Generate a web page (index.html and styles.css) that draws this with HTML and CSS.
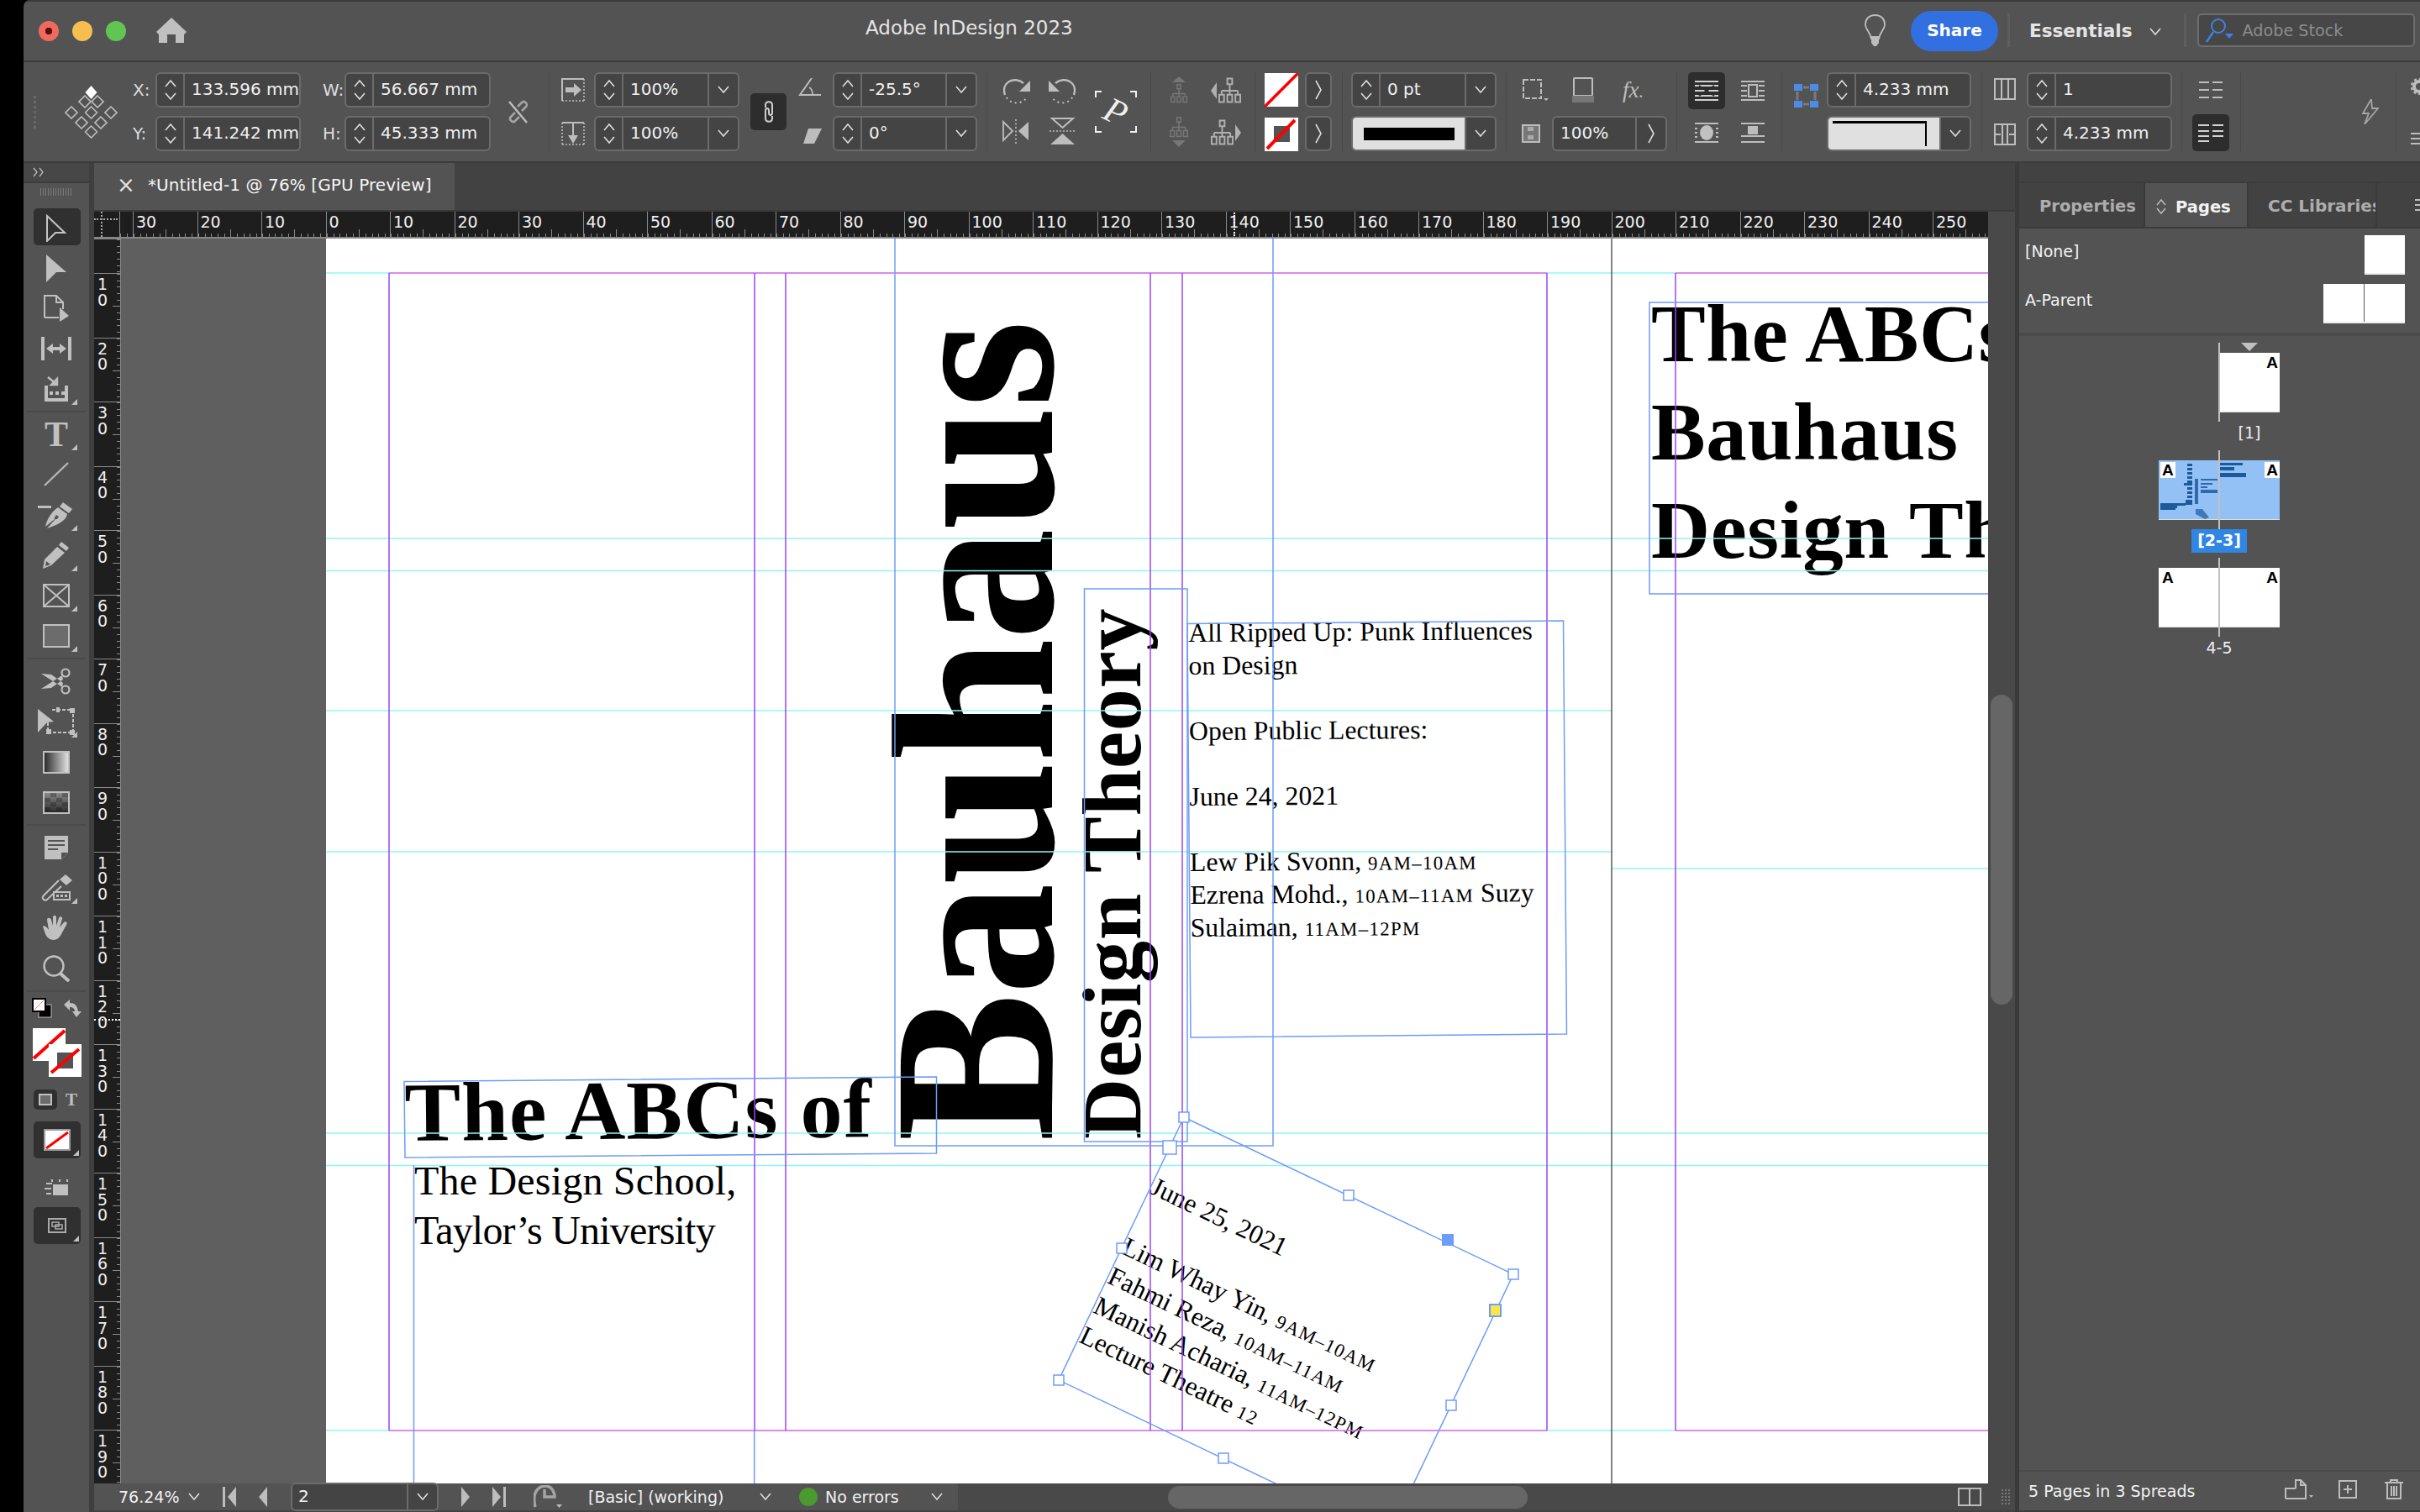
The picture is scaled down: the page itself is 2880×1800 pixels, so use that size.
FILE: index.html
```html
<!DOCTYPE html>
<html lang="en">
<head>
<meta charset="utf-8">
<title>Adobe InDesign 2023</title>
<link rel="stylesheet" href="styles.css">
</head>
<body>
<svg class="defs" aria-hidden="true">
  <symbol id="up" viewBox="0 0 14 10"><path d="M1 9L7 2l6 7" fill="none" stroke="#ddd" stroke-width="1.6"/></symbol>
  <symbol id="dn" viewBox="0 0 14 10"><path d="M1 1l6 7 6-7" fill="none" stroke="#ddd" stroke-width="1.6"/></symbol>
  <symbol id="rt" viewBox="0 0 10 24"><path d="M2 1l6 11-6 11" fill="none" stroke="#ddd" stroke-width="1.6"/></symbol>
  <symbol id="dia" viewBox="0 0 16 16"><path d="M8 1l7 7-7 7-7-7z" fill="none" stroke="#bdbdbd" stroke-width="1.6"/></symbol>
  <symbol id="tree" viewBox="0 0 28 32"><path d="M11 1h6v7h-6zM14 8v8M4 16h20M4 16v5M14 16v5M24 16v5M1 21h6v9H1zM11 21h6v9h-6zM21 21h6v9h-6z" fill="none" stroke="currentColor" stroke-width="2"/></symbol>
</svg>

<div class="app">
  <div class="strip"></div>
  <div class="win">

    <header class="title">
      <div class="lights"><i class="lt red"></i><i class="lt yel"></i><i class="lt grn"></i></div>
      <svg class="home" viewBox="0 0 36 30" width="36" height="30"><path d="M18 0L0 17l3 3v10h10V20h10v10h10V20l3-3z" fill="#c0c0c0"/></svg>
      <div class="appname">Adobe InDesign 2023</div>
      <svg class="bulb" viewBox="0 0 27 38" width="27" height="38"><path d="M13.500 1C6 1 2 6 2 12c0 6 6 10 7 17h9c1-7 7-11 7-17 0-6-4-11-11.500-11z" fill="none" stroke="#bdbdbd" stroke-width="1.800"/><path d="M9 26h9v8l-3 4h-3l-3-4z" fill="#bdbdbd"/></svg>
      <div class="share">Share</div>
      <i class="tsep"></i>
      <div class="ess">Essentials</div>
      <svg class="ess-chev" width="14" height="10"><use href="#dn"/></svg>
      <i class="tsep tsep2"></i>
      <div class="search">
        <svg viewBox="0 0 34 30" width="34" height="30"><circle cx="16" cy="10" r="8" fill="none" stroke="#3a83e6" stroke-width="2"/><path d="M10 17L2 29" stroke="#3a83e6" stroke-width="2.500"/><path d="M24 19h10l-5 6z" fill="#3a83e6"/></svg>
        <span>Adobe Stock</span>
      </div>
    </header>

    <section class="ctrl">
      <div class="c c-grip"></div>
      <div class="c c-proxy">
        <svg viewBox="0 0 63 63" width="63" height="63">
          <path d="M31.500 0l7 8-7 8-7-8z" fill="#fff"/>
          <use href="#dia" x="16" y="11" width="16" height="16"/><use href="#dia" x="31" y="11" width="16" height="16"/>
          <use href="#dia" x="0" y="24" width="16" height="16"/><use href="#dia" x="23.500" y="24" width="16" height="16"/><use href="#dia" x="47" y="24" width="16" height="16"/>
          <use href="#dia" x="12" y="36" width="16" height="16"/><use href="#dia" x="35" y="36" width="16" height="16"/>
          <use href="#dia" x="23.500" y="47" width="16" height="16"/>
        </svg>
      </div>
      <div class="c c-l1 col lab"><span>X:</span><span>Y:</span></div>
      <div class="c c-f1 col">
        <div class="f"><div class="st"><svg width="14" height="10"><use href="#up"/></svg><svg width="14" height="10"><use href="#dn"/></svg></div><div class="v">133.596 mm</div></div>
        <div class="f"><div class="st"><svg width="14" height="10"><use href="#up"/></svg><svg width="14" height="10"><use href="#dn"/></svg></div><div class="v">141.242 mm</div></div>
      </div>
      <div class="c c-l2 col lab"><span>W:</span><span>H:</span></div>
      <div class="c c-f2 col">
        <div class="f"><div class="st"><svg width="14" height="10"><use href="#up"/></svg><svg width="14" height="10"><use href="#dn"/></svg></div><div class="v">56.667 mm</div></div>
        <div class="f"><div class="st"><svg width="14" height="10"><use href="#up"/></svg><svg width="14" height="10"><use href="#dn"/></svg></div><div class="v">45.333 mm</div></div>
      </div>
      <div class="c c-chain">
        <svg viewBox="0 0 28 28" width="28" height="28"><g fill="none" stroke="#a5a5a5" stroke-width="2.500"><path d="M13 8l5-5c3-3 8 2 5 5l-5 5M15 20l-5 5c-3 3-8-2-5-5l5-5"/><path d="M3 2l21 25" stroke="#bdbdbd"/></g></svg>
      </div>
      <i class="c c-s1 vsep"></i>
      <div class="c c-sico col">
        <svg viewBox="0 0 28 28" width="28" height="28" class="ic"><path d="M27 27H1M27 27V1" fill="none" stroke="#bdbdbd" stroke-width="1.600" stroke-dasharray="2 2"/><path d="M1 27V1h26" fill="none" stroke="#bdbdbd" stroke-width="2"/><path d="M5 11h10V6l9 8-9 8v-5H5z" fill="#bdbdbd"/></svg>
        <svg viewBox="0 0 28 28" width="28" height="28" class="ic"><path d="M1 27V1M27 27V1M1 27h26" fill="none" stroke="#bdbdbd" stroke-width="1.600" stroke-dasharray="2 2"/><path d="M1 1h26M14 2v14" stroke="#bdbdbd" stroke-width="2"/><path d="M8 16h12l-6 10z" fill="#bdbdbd"/></svg>
      </div>
      <div class="c c-f3 col">
        <div class="f"><div class="st"><svg width="14" height="10"><use href="#up"/></svg><svg width="14" height="10"><use href="#dn"/></svg></div><div class="v">100%</div><div class="dd"><svg width="14" height="10"><use href="#dn"/></svg></div></div>
        <div class="f"><div class="st"><svg width="14" height="10"><use href="#up"/></svg><svg width="14" height="10"><use href="#dn"/></svg></div><div class="v">100%</div><div class="dd"><svg width="14" height="10"><use href="#dn"/></svg></div></div>
      </div>
      <div class="c c-link">
        <svg viewBox="0 0 16 28" width="16" height="28"><path d="M4 9V6c0-5 8-5 8 0v9c0 4-4 4-4 0v-3M12 19v3c0 5-8 5-8 0v-9c0-4 4-4 4 0v3" fill="none" stroke="#cfcfcf" stroke-width="2"/></svg>
      </div>
      <div class="c c-shear col">
        <svg viewBox="0 0 28 22" width="28" height="22" class="ic"><path d="M16 0L2 20h25" fill="none" stroke="#bdbdbd" stroke-width="2"/><path d="M13 11c4 2 4 6 4 9" fill="none" stroke="#bdbdbd" stroke-width="1.600"/></svg>
        <svg viewBox="0 0 28 22" width="28" height="22" class="ic"><path d="M12 2h16l-9 18H6z" fill="#bdbdbd"/></svg>
      </div>
      <div class="c c-f4 col">
        <div class="f"><div class="st"><svg width="14" height="10"><use href="#up"/></svg><svg width="14" height="10"><use href="#dn"/></svg></div><div class="v">-25.5°</div><div class="dd"><svg width="14" height="10"><use href="#dn"/></svg></div></div>
        <div class="f"><div class="st"><svg width="14" height="10"><use href="#up"/></svg><svg width="14" height="10"><use href="#dn"/></svg></div><div class="v">0°</div><div class="dd"><svg width="14" height="10"><use href="#dn"/></svg></div></div>
      </div>
      <i class="c c-s2 vsep"></i>
      <div class="c c-rot col">
        <svg viewBox="0 0 33 32" width="33" height="32" class="ic"><path d="M3 20C-2 5 14-3 25 6" fill="none" stroke="#bdbdbd" stroke-width="2.400"/><path d="M33 3v13H20z" fill="#bdbdbd"/><path d="M5 23c3 7 17 10 24 0" fill="none" stroke="#bdbdbd" stroke-width="2" stroke-dasharray="2 4"/></svg>
        <svg viewBox="0 0 33 32" width="33" height="32" class="ic"><path d="M16 1v30" stroke="#bdbdbd" stroke-width="1.600" stroke-dasharray="2 2.500"/><path d="M1 4v22l11-11z" fill="none" stroke="#bdbdbd" stroke-width="1.800"/><path d="M19 15L31 4v22z" fill="#bdbdbd"/></svg>
      </div>
      <div class="c c-rot2 col">
        <svg viewBox="0 0 33 32" width="33" height="32" class="ic"><path d="M30 20C35 5 19-3 8 6" fill="none" stroke="#bdbdbd" stroke-width="2.400"/><path d="M0 3v13h13z" fill="#bdbdbd"/><path d="M28 23c-3 7-17 10-24 0" fill="none" stroke="#bdbdbd" stroke-width="2" stroke-dasharray="2 4"/></svg>
        <svg viewBox="0 0 33 34" width="33" height="34" class="ic"><path d="M4 2h25L16.500 13z" fill="none" stroke="#bdbdbd" stroke-width="2"/><path d="M1 17h31" stroke="#bdbdbd" stroke-width="1.600" stroke-dasharray="2 2"/><path d="M16.500 20L31 33H2z" fill="#bdbdbd"/></svg>
      </div>
      <div class="c c-p">
        <svg viewBox="0 0 50 50" width="50" height="50"><path d="M1 8V1h7M42 1h7v7M1 42v7h7M49 42v7h-7" fill="none" stroke="#f0f0f0" stroke-width="2"/></svg>
        <span class="pglyph">P</span>
      </div>
      <i class="c c-s3 vsep"></i>
      <div class="c c-a1 col">
        <div class="dim"><svg viewBox="0 0 28 32" width="28" height="32"><path d="M14 0l8 7H6z" fill="currentColor"/><use href="#tree" y="9" height="23" width="28"/></svg></div>
        <div class="dim"><svg viewBox="0 0 28 36" width="28" height="36"><use href="#tree" height="25" width="28"/><path d="M14 36l8-8H6z" fill="currentColor"/></svg></div>
      </div>
      <div class="c c-a2 col">
        <div class="dim lite"><svg viewBox="0 0 36 34" width="36" height="34"><path d="M0 17l7-10v20z" fill="currentColor"/><use href="#tree" x="9" width="27" height="34"/></svg></div>
        <div class="dim lite"><svg viewBox="0 0 36 34" width="36" height="34"><use href="#tree" width="27" height="34"/><path d="M36 17l-7-10v20z" fill="currentColor"/></svg></div>
      </div>
      <i class="c c-s4 vsep"></i>
      <div class="c c-sw col">
        <svg viewBox="0 0 40 40" width="40" height="40" class="ic"><rect width="40" height="40" fill="#fff"/><path d="M0 40L40 0" stroke="#f00" stroke-width="3.500"/></svg>
        <svg viewBox="0 0 40 40" width="40" height="40" class="ic"><rect width="40" height="40" fill="#fff"/><rect x="11" y="10" width="19" height="19" fill="#535353"/><path d="M3 37L36 3" stroke="#f00" stroke-width="4"/></svg>
      </div>
      <div class="c c-swb col">
        <div class="chev"><svg width="10" height="24"><use href="#rt"/></svg></div>
        <div class="chev"><svg width="10" height="24"><use href="#rt"/></svg></div>
      </div>
      <i class="c c-s5 vsep"></i>
      <div class="c c-f5 col">
        <div class="f"><div class="st"><svg width="14" height="10"><use href="#up"/></svg><svg width="14" height="10"><use href="#dn"/></svg></div><div class="v">0 pt</div><div class="dd"><svg width="14" height="10"><use href="#dn"/></svg></div></div>
        <div class="f"><div class="v pre"><i class="strokebar"></i></div><div class="dd"><svg width="14" height="10"><use href="#dn"/></svg></div></div>
      </div>
      <i class="c c-s6 vsep"></i>
      <div class="c c-mix col">
        <div class="mixrow">
          <svg viewBox="0 0 32 28" width="32" height="28"><path d="M2 2h21v22H2z" fill="none" stroke="#bdbdbd" stroke-width="2" stroke-dasharray="6 2"/><path d="M26 24h6l-3 3z" fill="#bdbdbd"/></svg>
          <svg viewBox="0 0 26 30" width="26" height="30"><rect x="2" y="1" width="22" height="21" rx="1" fill="none" stroke="#bdbdbd" stroke-width="2"/><rect y="22" width="26" height="8" fill="#777"/></svg>
          <span class="fx">fx<small>.</small></span>
        </div>
        <div class="mixrow">
          <svg viewBox="0 0 22 22" width="22" height="22"><rect x="1" y="1" width="20" height="20" fill="#777" stroke="#bdbdbd" stroke-width="2"/><path d="M7 3h7v5H7zM7 13h7v5H7z" fill="#aaa"/></svg>
          <div class="f f-op"><div class="v">100%</div><div class="dd small"><svg width="10" height="24"><use href="#rt"/></svg></div></div>
        </div>
      </div>
      <i class="c c-s7 vsep"></i>
      <div class="c c-wrap col">
        <div class="mixrow tight">
          <div class="dkbtn"><svg viewBox="0 0 30 26" width="30" height="26"><path d="M1 2h28M1 24h28M1 7h28M1 19h28M1 13h28" stroke="#d0d0d0" stroke-width="2" fill="none"/><path d="M6 7l18 12M24 7L6 19" stroke="#2d2d2d" stroke-width="2" fill="none"/></svg></div>
          <svg class="wr" viewBox="0 0 30 26" width="30" height="26"><path d="M1 2h28M1 24h28M1 7h7M22 7h7M1 13h7M22 13h7M1 19h7M22 19h7" stroke="#bdbdbd" stroke-width="2"/><rect x="10" y="6" width="10" height="14" fill="none" stroke="#bdbdbd" stroke-width="2"/></svg>
        </div>
        <div class="mixrow tight">
          <div class="noborder"><svg viewBox="0 0 30 26" width="30" height="26"><path d="M1 2h28M1 24h28M1 8h3M26 8h3M1 13h3M26 13h3M1 18h3M26 18h3" stroke="#bdbdbd" stroke-width="2"/><ellipse cx="15" cy="13" rx="8" ry="9" fill="#c0c0c0"/></svg></div>
          <svg class="wr" viewBox="0 0 30 26" width="30" height="26"><path d="M1 2h28M1 17h28M1 24h28" stroke="#bdbdbd" stroke-width="2"/><rect x="9" y="5" width="12" height="10" fill="#bdbdbd"/></svg>
        </div>
      </div>
      <i class="c c-s8 vsep"></i>
      <div class="c c-grid">
        <svg viewBox="0 0 29 28" width="29" height="28"><path d="M0 0h10v8H0zM19 0h10v8H19zM0 20h10v8H0zM19 20h10v8H19z" fill="#4c8be8"/><path d="M11 4h7M4 9v10M25 9v10M11 24h7" stroke="#7a7a7a" stroke-width="3"/></svg>
      </div>
      <div class="c c-f6 col">
        <div class="f"><div class="st"><svg width="14" height="10"><use href="#up"/></svg><svg width="14" height="10"><use href="#dn"/></svg></div><div class="v">4.233 mm</div></div>
        <div class="f"><div class="v pre strokestyle"><i></i></div><div class="dd"><svg width="14" height="10"><use href="#dn"/></svg></div></div>
      </div>
      <i class="c c-s9 vsep"></i>
      <div class="c c-colic col">
        <svg viewBox="0 0 26 26" width="26" height="26" class="ic"><path d="M1 1h24v24H1zM9 1v24M17 1v24" fill="none" stroke="#bdbdbd" stroke-width="2"/></svg>
        <svg viewBox="0 0 26 26" width="26" height="26" class="ic"><path d="M1 1h24v24H1zM10 1v24M16 1v24M2 13h6M24 13h-6" fill="none" stroke="#bdbdbd" stroke-width="2"/></svg>
      </div>
      <div class="c c-f7 col">
        <div class="f"><div class="st"><svg width="14" height="10"><use href="#up"/></svg><svg width="14" height="10"><use href="#dn"/></svg></div><div class="v">1</div></div>
        <div class="f"><div class="st"><svg width="14" height="10"><use href="#up"/></svg><svg width="14" height="10"><use href="#dn"/></svg></div><div class="v">4.233 mm</div></div>
      </div>
      <i class="c c-s10 vsep"></i>
      <div class="c c-col2 col">
        <div class="colrow"><svg viewBox="0 0 30 22" width="30" height="22"><path d="M1 2h12M17 2h12M1 11h12M17 11h12M1 20h12M17 20h12" stroke="#bdbdbd" stroke-width="2"/></svg></div>
        <div class="dkbtn"><svg viewBox="0 0 32 22" width="32" height="22"><path d="M1 2h13M18 2h13M1 9h13M18 9h13M1 15h13M18 15h13M1 21h13" stroke="#d0d0d0" stroke-width="2"/></svg></div>
      </div>
      <i class="c c-s11 vsep"></i>
      <div class="c c-bolt"><svg viewBox="0 0 20 30" width="20" height="30"><path d="M11 0L1 17h7L3 30 19 11h-7z" fill="none" stroke="#a5a5a5" stroke-width="1.800"/></svg></div>
      <i class="c c-s12 vsep"></i>
      <div class="c c-gear col">
        <svg viewBox="0 0 20 20" width="20" height="20" class="ic"><circle cx="10" cy="10" r="6" fill="none" stroke="#bdbdbd" stroke-width="4"/><circle cx="10" cy="10" r="9" fill="none" stroke="#bdbdbd" stroke-width="2.500" stroke-dasharray="3 3"/></svg>
        <svg viewBox="0 0 20 16" width="20" height="16" class="ic"><path d="M0 2h20M0 8h20M0 14h20" stroke="#bdbdbd" stroke-width="2"/></svg>
      </div>
    </section>

    <div class="main">
      <aside class="side">
        <div class="collapse"><svg viewBox="0 0 14 14" width="14" height="14"><path d="M1 2l4 5-4 5M8 2l4 5-4 5" fill="none" stroke="#bbb" stroke-width="1.300"/></svg></div>
        <div class="grip"></div>
        <div class="tool on"><svg viewBox="0 0 24 33" width="24" height="33"><path d="M1 2l21 20H11L1 32z" fill="none" stroke="#c4c4c4" stroke-width="2"/></svg></div>
        <div class="tool"><svg viewBox="0 0 24 33" width="24" height="33"><path d="M0 0l24 21H12L0 33z" fill="#c0c0c0"/></svg></div>
        <div class="tool"><svg viewBox="0 0 30 32" width="30" height="32"><path d="M1 27V1h14l8 8v8M1 27h17M15 1v8h8" fill="none" stroke="#c0c0c0" stroke-width="2"/><path d="M19 15l11 10-11 7z" fill="#c0c0c0"/></svg></div>
        <div class="tool"><svg viewBox="0 0 36 28" width="36" height="28"><path d="M0 0h4v28H0zM32 0h4v28h-4zM6 14l8-6v4h8V8l8 6-8 6v-4h-8v4z" fill="#c0c0c0"/></svg></div>
        <div class="tool fly"><svg viewBox="0 0 30 32" width="30" height="32"><path d="M1 12v19h28V12h-4v15H5V12z" fill="#c0c0c0"/><path d="M5 2l10 8M9 11h7V4z" stroke="#c0c0c0" stroke-width="2.400" fill="none"/><path d="M7 19h4v4H7zM14 19h4v4h-4zM21 19h4v4h-4z" fill="#c0c0c0"/></svg></div>
        <i class="tsepx"></i>
        <div class="tool fly"><span class="t-glyph">T</span></div>
        <div class="tool"><svg viewBox="0 0 30 30" width="30" height="30"><path d="M1 28L29 1" stroke="#b5b5b5" stroke-width="2.400"/></svg></div>
        <div class="tool fly"><svg viewBox="0 0 44 34" width="44" height="34"><path d="M0 6h16v3H0zM30 2l11 8-4 5-11-8z" fill="#c0c0c0"/><path d="M24 8l11 8c-1 8-12 13-24 17l10-11 2 0 2-3-3-2-2 3 0 2-11 9c2-10 8-18 15-23z" fill="#c0c0c0"/></svg></div>
        <div class="tool fly"><svg viewBox="0 0 34 34" width="34" height="34"><path d="M23 1l9 7-3 4-9-7zM18 7l9 7-16 15-10 4 2-11z" fill="#c0c0c0"/><path d="M5 24l5 4-6 2z" fill="#535353"/></svg></div>
        <div class="tool fly"><svg viewBox="0 0 32 28" width="32" height="28"><path d="M1 1h30v26H1zM1 1l30 26M31 1L1 27" fill="none" stroke="#c0c0c0" stroke-width="2"/></svg></div>
        <div class="tool fly"><svg viewBox="0 0 32 28" width="32" height="28"><rect x="1" y="1" width="30" height="26" fill="#6c6c6c" stroke="#c0c0c0" stroke-width="2"/></svg></div>
        <i class="tsepx"></i>
        <div class="tool"><svg viewBox="0 0 36 32" width="36" height="32"><circle cx="29" cy="6" r="4.500" fill="none" stroke="#c0c0c0" stroke-width="2.200"/><circle cx="29" cy="26" r="4.500" fill="none" stroke="#c0c0c0" stroke-width="2.200"/><path d="M25 9L0 25l12-1 14-10zM25 23L0 7l12 1 14 10z" fill="#c0c0c0"/></svg></div>
        <div class="tool fly"><svg viewBox="0 0 44 34" width="44" height="34"><path d="M0 0l19 15-8 1-11 12z" fill="#c0c0c0" transform="translate(0 2)"/><path d="M12 12v18h30V3H16" fill="none" stroke="#c0c0c0" stroke-width="2" stroke-dasharray="4 2"/><path d="M10 26h6v6h-6zM38 1h6v6h-6zM38 27h6v6h-6zM22 0h4v6h-4z" fill="#c0c0c0"/></svg></div>
        <div class="tool"><i class="swatch-tool grad"></i></div>
        <div class="tool"><i class="swatch-tool feather"></i></div>
        <i class="tsepx"></i>
        <div class="tool"><svg viewBox="0 0 28 28" width="28" height="28"><path d="M0 0h28v20l-8 8H0zM4 5h20v2H4zM4 10h20v2H4zM4 15h12v2H4z" fill="#c0c0c0" fill-rule="evenodd"/><path d="M20 20h8l-8 8z" fill="#535353"/></svg></div>
        <div class="tool fly"><svg viewBox="0 0 42 32" width="42" height="32"><path d="M32 0l8 7-7 6-8-7z" fill="#c0c0c0"/><path d="M24 7l-18 18c-3 3 0 7 4 5l17-16" fill="none" stroke="#c0c0c0" stroke-width="2"/><rect x="18" y="21" width="19" height="9" fill="#535353" stroke="#c0c0c0" stroke-width="2"/><path d="M21 24h3v3h-3zM26 24h3v3h-3zM31 24h3v3h-3z" fill="#c0c0c0"/></svg></div>
        <div class="tool"><svg viewBox="0 0 32 32" width="32" height="32"><path d="M0 14c2-2 5 1 7 4L5 6c0-3 4-3 5 0l2 7V3c0-3 4-3 4 0v10l3-9c1-3 5-2 4 1l-3 10 5-6c2-2 5 0 3 3l-6 11c-2 4-5 7-9 7-5 0-8-3-10-7z" fill="#c0c0c0"/></svg></div>
        <div class="tool"><svg viewBox="0 0 32 32" width="32" height="32"><circle cx="13" cy="13" r="11.500" fill="none" stroke="#c0c0c0" stroke-width="2.400"/><path d="M21 22l10 9" stroke="#c0c0c0" stroke-width="4"/></svg></div>
        <i class="tsepx"></i>
        <div class="swaprow">
          <svg viewBox="0 0 24 24" width="24" height="24"><rect x="8" y="8" width="15" height="15" fill="#000" stroke="#c0c0c0"/><rect x="1" y="1" width="15" height="15" fill="#fff" stroke="#000" stroke-width="2"/><path d="M3 14L14 3" stroke="#e77" stroke-width="1"/></svg>
          <svg viewBox="0 0 22 22" width="22" height="22"><path d="M0 6l7-6v4c6 0 9 3 10 10h4l-6 7-5-7h3c0-3-2-5-6-5v4z" fill="#c0c0c0"/></svg>
        </div>
        <div class="fillstroke">
          <svg class="fill-sw" viewBox="0 0 39 39" width="39" height="39"><rect width="39" height="39" fill="#fff"/><path d="M1 36L38 3" stroke="#f00" stroke-width="4"/></svg>
          <svg class="stroke-sw" viewBox="0 0 39 39" width="39" height="39"><rect width="39" height="39" fill="#fff"/><rect x="10" y="10" width="19" height="19" fill="#535353"/><path d="M3 34L36 6" stroke="#f00" stroke-width="4"/></svg>
        </div>
        <div class="cont">
          <div class="cont-on"><i></i></div>
          <span class="cont-t">T</span>
        </div>
        <div class="bigbtn fly"><svg viewBox="0 0 32 26" width="32" height="26"><rect width="32" height="26" fill="#fff" stroke="#9c9c9c" stroke-width="4"/><path d="M3 23L29 4" stroke="#f00" stroke-width="3"/></svg></div>
        <div class="preview"><svg viewBox="0 0 28 20" width="28" height="20"><path d="M2 6h7M0 12h8M2 18h6M9 1v3M18 1v3M27 1v3" stroke="#c0c0c0" stroke-width="2"/><rect x="10" y="7" width="18" height="13" fill="#c0c0c0"/></svg></div>
        <div class="bigbtn lower fly"><svg viewBox="0 0 22 18" width="22" height="18"><rect x="1" y="1" width="20" height="16" fill="none" stroke="#aaa" stroke-width="2"/><rect x="5" y="5" width="8" height="5" fill="none" stroke="#aaa" stroke-width="1.500"/><rect x="9" y="8" width="8" height="5" fill="none" stroke="#aaa" stroke-width="1.500"/></svg></div>
      </aside>

      <div class="work">
        <div class="tabs">
          <div class="doctab"><span class="x">×</span><span>*Untitled-1 @ 76% [GPU Preview]</span></div>
        </div>
        <div class="ed">
          <div class="hr">
            <div class="corner"></div>
            <div class="hc lead"></div>
            <div class="hc">30</div><div class="hc">20</div><div class="hc">10</div><div class="hc">0</div><div class="hc">10</div><div class="hc">20</div><div class="hc">30</div><div class="hc">40</div><div class="hc">50</div><div class="hc">60</div><div class="hc">70</div><div class="hc">80</div><div class="hc">90</div><div class="hc">100</div><div class="hc">110</div><div class="hc">120</div><div class="hc">130</div><div class="hc">140</div><div class="hc">150</div><div class="hc">160</div><div class="hc">170</div><div class="hc">180</div><div class="hc">190</div><div class="hc">200</div><div class="hc">210</div><div class="hc">220</div><div class="hc">230</div><div class="hc">240</div><div class="hc">250</div>
            <i class="hmark"></i>
          </div>
          <div class="vs"><div class="vpill"></div></div>
          <div class="vr">
            <div class="vc lead"></div>
            <div class="vc">10</div><div class="vc">20</div><div class="vc">30</div><div class="vc">40</div><div class="vc">50</div><div class="vc">60</div><div class="vc">70</div><div class="vc">80</div><div class="vc">90</div><div class="vc">100</div><div class="vc">110</div><div class="vc">120</div><div class="vc">130</div><div class="vc">140</div><div class="vc">150</div><div class="vc">160</div><div class="vc">170</div><div class="vc">180</div><div class="vc">190</div>
            <i class="vmark"></i>
          </div>
          <div class="canvas">
            <div class="art">
              <div class="page"></div>
              <div class="txt bau">Bauhaus</div>
              <div class="txt dth">Design Theory</div>
              <div class="txt abc">The ABCs of</div>
              <div class="txt sub">The Design School,<br><span class="sub2">Taylor’s University</span></div>
              <div class="txt lec">All Ripped Up: Punk Influences<br>on Design<br><br>Open Public Lectures:<br><br>June 24, 2021<br><br>Lew Pik Svonn, <span class="sc">9AM–10AM</span><br>Ezrena Mohd., <span class="sc">10AM–11AM</span> Suzy<br>Sulaiman, <span class="sc">11AM–12PM</span></div>
              <div class="txt lec2">June 25, 2021<br><br>Lim Whay Yin, <span class="sc">9AM–10AM</span><br>Fahmi Reza, <span class="sc">10AM–11AM</span><br>Manish Acharia, <span class="sc">11AM–12PM</span><br>Lecture Theatre <span class="sc">12</span></div>
              <div class="txt rt">The ABCs of<br>Bauhaus<br>Design Theory</div>
              <svg class="lines" width="2880" height="1800" viewBox="0 0 2880 1800">
                <g stroke="#8ff6f6" stroke-width="1.500">
                  <path d="M388 325H463M1841 325H1994M388 1703H463M1841 1703H1994"/>
                  <path d="M388 641H2366M388 679.500H2366M388 1349H2366M388 1387.500H2366"/>
                  <path d="M388 846H1918M388 1014H1918M1918 1034H2366"/>
                </g>
                <path d="M1918 284V1766" stroke="#5a5a5a" stroke-width="1.500"/>
                <g stroke="#d163ef" stroke-width="1.500"><path d="M463 325H1841M1994 325H2366M463 1703H1841M1994 1703H2366"/></g>
                <g stroke="#9a45f5" stroke-width="1.500"><path d="M463 325V1703M898 325V1703M935 325V1703M1369 325V1703M1407 325V1703M1841 325V1703M1994 325V1703"/></g>
                <g fill="none" stroke="#6c9df7" stroke-width="1.500">
                  <path d="M1065 284V1364H1515V284"/>
                  <path d="M1290.500 701H1413V1359H1290.500Z"/>
                  <path d="M1413 742.500L1860.500 739L1864.500 1231L1417 1235Z"/>
                  <path d="M481 1287.500L1114.500 1282V1373L482 1378Z"/>
                  <path d="M492.500 1387V1766M897.700 1703V1766"/>
                  <path d="M2366 360H1963V707H2366"/>
                  <path d="M1409 1330L1801 1517L1652 1830L1260 1643Z"/>
                </g>
                <g fill="#fff" stroke="#6c9df7" stroke-width="1.500">
                  <rect x="1403" y="1324" width="12" height="12"/>
                  <rect x="1384" y="1358" width="16" height="16"/>
                  <rect x="1599" y="1417" width="12" height="12"/>
                  <rect x="1795" y="1511" width="12" height="12"/>
                  <rect x="1329" y="1480" width="12" height="12"/>
                  <rect x="1254" y="1637" width="12" height="12"/>
                  <rect x="1450" y="1730" width="12" height="12"/>
                  <rect x="1721" y="1667" width="12" height="12"/>
                </g>
                <rect x="1716" y="1469" width="14" height="14" fill="#6c9df7"/>
                <rect x="1773" y="1553" width="13" height="14" fill="#fbe64a" stroke="#6c9df7" stroke-width="2"/>
              </svg>
            </div>
          </div>
          <div class="status">
            <div class="stat-l">
              <span class="zoomv">76.24%</span>
              <svg width="14" height="10"><use href="#dn"/></svg>
              <svg class="nav n1" viewBox="0 0 16 26" width="16" height="26"><path d="M0 1h3v24H0zM16 1v24L6 13z" fill="#bdbdbd"/></svg>
              <svg class="nav n2" viewBox="0 0 10 26" width="10" height="26"><path d="M10 1v24L0 13z" fill="#bdbdbd"/></svg>
              <div class="f pgf"><div class="v">2</div><div class="dd"><svg width="14" height="10"><use href="#dn"/></svg></div></div>
              <svg class="nav n3" viewBox="0 0 10 26" width="10" height="26"><path d="M0 1v24L10 13z" fill="#bdbdbd"/></svg>
              <svg class="nav n4" viewBox="0 0 16 26" width="16" height="26"><path d="M16 1h-3v24h3zM0 1v24L10 13z" fill="#bdbdbd"/></svg>
              <svg class="nav n5" viewBox="0 0 34 28" width="34" height="28"><path d="M2 26C-3 6 8 1 14 1c8 0 11 8 11 13H13V5" fill="none" stroke="#a5a5a5" stroke-width="3.500"/><path d="M27 23h7l-3.500 4z" fill="#bdbdbd"/></svg>
              <span class="basic">[Basic] (working)</span>
              <svg class="nav n6" width="14" height="10"><use href="#dn"/></svg>
              <i class="dot"></i>
              <span class="noerr">No errors</span>
              <svg class="nav n7" width="14" height="10"><use href="#dn"/></svg>
            </div>
            <div class="stat-r">
              <div class="hpill"></div>
              <svg class="spreadic" viewBox="0 0 28 22" width="28" height="22"><path d="M1 1h26v20H1zM14 1v20" fill="none" stroke="#bdbdbd" stroke-width="2"/></svg>
              <i class="rgrip"></i>
            </div>
          </div>
        </div>
      </div>

      <aside class="panel">
        <div class="pstrip"></div>
        <div class="ptabs">
          <div class="ptab first">Properties</div>
          <div class="ptab act"><svg viewBox="0 0 12 20" width="12" height="20"><path d="M1 8l5-6 5 6M1 12l5 6 5-6" fill="none" stroke="#bbb" stroke-width="1.500"/></svg><span>Pages</span></div>
          <div class="ptab third">CC Libraries</div>
          <div class="pmenu"><svg viewBox="0 0 18 16" width="18" height="16"><path d="M0 2h18M0 8h18M0 14h18" stroke="#bdbdbd" stroke-width="2"/></svg></div>
        </div>
        <div class="masters">
          <div class="mrow"><span>[None]</span><div class="mth"><i></i></div></div>
          <div class="mrow"><span>A-Parent</span><div class="mth"><i></i><i></i></div></div>
        </div>
        <div class="spreads">
          <div class="spread">
            <div class="pg empty"></div>
            <div class="pg"><b class="a ar">A</b></div>
            <i class="spine"></i><i class="marker"></i>
          </div>
          <div class="plabel right"><span>[1]</span></div>
          <div class="spread sel">
            <div class="pg"><b class="a">A</b></div>
            <div class="pg"><b class="a ar">A</b></div>
            <svg class="mini" viewBox="2568 548 144 71" width="144" height="71">
              <g fill="#1d5a9c">
                <path d="M2641 551h27v3h-27zM2641 556h17v4h-17zM2641 563h31v5h-31z"/>
                <path d="M2602 552h6v3h-6zM2602 557h6v3h-6zM2602 562h6v3h-6zM2602 567h6v3h-6zM2602 572h6v3h-6zM2598 575h10v3h-10zM2602 580h6v3h-6zM2602 585h6v3h-6zM2602 590h6v3h-6zM2600 595h8v3h-8z"/>
                <path d="M2611 570h4v30h-4zM2618 570h20v2h-20zM2618 575h14v2h-14zM2618 579h8v2h-8zM2618 583h20v4h-20z" opacity=".85"/>
                <path d="M2570 599h30v3h-30zM2570 602h20v3h-20zM2570 605h18v2h-18zM2600 598h8v3h-8z"/>
                <path d="M2612 606l8 0 8 10-5 2-11-6z" opacity=".7"/>
              </g>
            </svg>
            <i class="spine"></i>
          </div>
          <div class="plabel"><span class="cur">[2-3]</span></div>
          <div class="spread">
            <div class="pg"><b class="a">A</b></div>
            <div class="pg"><b class="a ar">A</b></div>
            <i class="spine"></i>
          </div>
          <div class="plabel"><span>4-5</span></div>
        </div>
        <div class="pfoot">
          <span>5 Pages in 3 Spreads</span>
          <svg class="fic" viewBox="0 0 34 24" width="34" height="24"><path d="M1 23V11h12M1 23h24V11M13 11V1h6l6 6v16M19 1v6h6" fill="none" stroke="#bdbdbd" stroke-width="2"/><path d="M29 19h5l-2.500 3z" fill="#bdbdbd"/></svg>
          <svg class="fic f2" viewBox="0 0 22 22" width="22" height="22"><path d="M1 1h20v20H1zM11 6v10M6 11h10" fill="none" stroke="#bdbdbd" stroke-width="2"/></svg>
          <svg class="fic f3" viewBox="0 0 22 24" width="22" height="24"><path d="M0 4h22M3 4v19h16V4M7 4V1h8v3M8 8v12M11 8v12M14 8v12" fill="none" stroke="#bdbdbd" stroke-width="2"/></svg>
        </div>
      </aside>
    </div>
  </div>
</div>
</body>
</html>
```
FILE: styles.css
```css
* { box-sizing: border-box; }
html, body { margin: 0; padding: 0; width: 2880px; height: 1800px; overflow: hidden; background: #000; }
body { font-family: "DejaVu Sans", "Liberation Sans", sans-serif; color: #eee; }
.defs { position: absolute; width: 0; height: 0; }
svg { display: block; flex: none; }
i { display: block; font-style: normal; }

.app { display: flex; width: 2880px; height: 1800px; }
.strip { width: 28px; background: #000; flex: none; }
.win { flex: 1; display: flex; flex-direction: column; background: #535353; border-top-left-radius: 8px; overflow: hidden; }

/* title bar */
.title { height: 74px; flex: none; display: flex; align-items: center; border-top: 2px solid #3c3c3c; border-bottom: 2px solid #3c3c3c; position: relative; }
.lights { display: flex; gap: 16px; margin-left: 18px; }
.lt { width: 24px; height: 24px; border-radius: 50%; }
.red { background: radial-gradient(circle, #5e0d0d 0 4px, #ef6a5e 4.500px); }
.yel { background: #f5bf4f; }
.grn { background: #61c554; }
.home { margin-left: 36px; margin-top: -2px; }
.appname { margin-left: 808px; font-size: 23px; color: #e4e4e4; width: 1188px; margin-top: -8px; white-space: nowrap; }
.bulb { margin-top: -2px; }
.share { margin-left: 29px; width: 104px; height: 48px; border-radius: 24px; background: #326fe0; color: #fff; font-size: 20px; font-weight: 700; text-align: center; line-height: 47px; }
.tsep { width: 3px; height: 40px; background: #5e5e5e; margin-left: 11px; margin-top: -2px; }
.ess { margin-left: 23px; font-size: 21.500px; font-weight: 700; color: #e4e4e4; margin-top: -2px; }
.ess-chev { margin-left: 20px; margin-top: 2px; }
.tsep2 { margin-left: 27px; }
.search { margin-left: 13px; width: 259px; height: 40px; border: 2px solid #6d6d6d; border-radius: 5px; background: #474747; display: flex; align-items: center; margin-top: -2px; padding-left: 7px; font-size: 19.200px; color: #8c8c8c; gap: 11px; }

/* control strip */
.ctrl { height: 120px; flex: none; display: flex; align-items: center; border-bottom: 2px solid #3c3c3c; overflow: hidden; }
.c { flex: none; }
.col { display: flex; flex-direction: column; justify-content: space-between; height: 94px; }
.vsep { height: 94px; background: #484848; }
.lab { font-size: 20px; color: #ddd; padding: 9px 0; }
.ic { margin: 7px 0; }
.c-grip { margin-left: 12px; width: 3px; height: 39px; border-left: 3px dotted #6a6a6a; }
.c-proxy { margin-left: 34px; width: 63px; }
.c-l1 { margin-left: 18px; width: 22px; }
.c-f1 { margin-left: 5px; width: 173px; }
.c-l2 { margin-left: 26px; width: 22px; }
.c-f2 { margin-left: 4px; width: 174px; }
.c-chain { margin-left: 19px; width: 29px; }
.c-s1 { margin-left: 21px; width: 1px; }
.c-sico { margin-left: 14px; width: 28px; }
.c-f3 { margin-left: 11px; width: 173px; }
.c-link { margin-left: 13px; width: 43px; height: 44px; background: #2d2d2d; border-radius: 5px; display: flex; align-items: center; justify-content: center; }
.c-shear { margin-left: 14px; width: 28px; }
.c-f4 { margin-left: 13px; width: 172px; }
.c-s2 { margin-left: 11px; width: 1px; }
.c-rot { margin-left: 18px; width: 33px; }
.c-rot2 { margin-left: 22px; width: 33px; }
.c-p { margin-left: 22px; width: 50px; position: relative; }
.pglyph { position: absolute; left: 12px; top: 1px; font: italic 42px "Liberation Serif", serif; color: #f0f0f0; transform: rotate(25.500deg); }
.c-s3 { margin-left: 16px; width: 1px; }
.c-a1 { margin-left: 19px; width: 27px; }
.c-a2 { margin-left: 25px; width: 35px; }
.dim { color: #777; margin: 5px 0; }
.dim.lite { color: #b0b0b0; }
.c-s4 { margin-left: 17px; width: 1px; }
.c-sw { margin-left: 11px; width: 40px; }
.c-sw .ic { margin: 1px 0 0; }
.c-swb { margin-left: 8px; width: 32px; }
.chev { height: 42px; border: 2px solid #6b6b6b; border-radius: 6px; background: #444; display: flex; align-items: center; justify-content: center; }
.c-s5 { margin-left: 12px; width: 1px; }
.c-f5 { margin-left: 10px; width: 173px; }
.c-s6 { margin-left: 11px; width: 1px; }
.c-mix { margin-left: 18px; width: 173px; }
.mixrow { display: flex; align-items: center; height: 42px; gap: 28px; }
.mixrow:last-child { gap: 14px; }
.fx { font: italic 27px "Liberation Serif", serif; color: #bdbdbd; margin-left: 6px; }
.f-op { flex: 1; border-right: 0; }
.c-s7 { margin-left: 11px; width: 1px; }
.c-wrap { margin-left: 13px; width: 94px; }
.c-wrap .mixrow.tight { gap: 18px; height: 44px; }
.mixrow.tight:last-child { gap: 18px; }
.dkbtn { width: 44px; height: 44px; background: #2d2d2d; border-radius: 5px; display: flex; align-items: center; justify-content: center; }
.noborder { width: 44px; display: flex; justify-content: center; }
.c-s8 { margin-left: 17px; width: 1px; }
.c-grid { margin-left: 14px; width: 29px; margin-top: -39px; }
.c-f6 { margin-left: 10px; width: 172px; }
.c-s9 { margin-left: 12px; width: 1px; }
.c-colic { margin-left: 14px; width: 26px; }
.c-f7 { margin-left: 13px; width: 173px; }
.c-s10 { margin-left: 11px; width: 1px; }
.c-col2 { margin-left: 12px; width: 44px; }
.colrow { height: 42px; display: flex; align-items: center; justify-content: center; }
.c-s11 { margin-left: 13px; width: 1px; }
.c-bolt { margin-left: 144px; width: 20px; }
.c-s12 { margin-left: 20px; width: 1px; }
.c-gear { margin-left: 17px; width: 20px; }

.f { display: flex; height: 42px; border: 2px solid #6b6b6b; border-radius: 6px; background: #444; font-size: 20px; color: #f0f0f0; overflow: hidden; }
.st { width: 33px; flex: none; border-right: 2px solid #6b6b6b; display: flex; flex-direction: column; align-items: center; justify-content: space-evenly; }
.v { flex: 1; padding-left: 8px; line-height: 37px; white-space: nowrap; overflow: hidden; }
.dd { width: 36px; flex: none; border-left: 2px solid #6b6b6b; display: flex; align-items: center; justify-content: center; }
.v.pre { padding: 0; background: #e0e0e0; display: flex; align-items: center; justify-content: center; }
.strokebar { width: 108px; height: 15px; background: #000; }
.strokestyle { position: relative; }
.strokestyle i { position: absolute; left: 5px; top: 4px; right: 15px; bottom: 4px; border-top: 3px solid #000; border-right: 2px solid #000; }

/* main */
.main { flex: 1; display: flex; min-height: 0; }
.side { width: 84px; flex: none; background: #535353; border-right: 6px solid #3f3f3f; display: flex; flex-direction: column; align-items: stretch; }
.collapse { height: 24px; background: #474747; border-bottom: 2px solid #3c3c3c; display: flex; align-items: center; padding-left: 11px; flex: none; }
.grip { height: 9px; margin: 6px 20px 14px; background: repeating-linear-gradient(90deg, #7a7a7a 0 1px, transparent 1px 3px); width: 38px; flex: none; }
.tool { height: 48px; flex: none; display: flex; align-items: center; justify-content: center; position: relative; }
.tool.on::before { content: ""; position: absolute; left: 12px; right: 10px; top: 1px; bottom: 3px; background: #303030; border-radius: 5px; }
.tool.on svg { position: relative; }
.fly::after { content: ""; position: absolute; right: 14px; bottom: 5px; border-left: 7px solid transparent; border-bottom: 7px solid #c0c0c0; }
.tsepx { height: 2px; margin: 2px 4px; background: #4a4a4a; flex: none; }
.t-glyph { font: 700 42px/1 "Liberation Serif", serif; color: #c0c0c0; }
.swatch-tool { width: 32px; height: 27px; border: 2px solid #c0c0c0; }
.grad { background: linear-gradient(90deg, #2c2c2c, #e0e0e0); }
.feather { background: linear-gradient(180deg, rgba(83,83,83,0), rgba(20,20,20,.8)), conic-gradient(#666 25%, #8a8a8a 0 50%, #666 0 75%, #8a8a8a 0) 0 0 / 14px 11px; }
.swaprow { height: 24px; margin-top: 5px; display: flex; align-items: center; gap: 14px; padding-left: 10px; flex: none; }
.swaprow svg:last-child { margin-top: 2px; }
.fillstroke { height: 58px; margin-top: 12px; position: relative; flex: none; }
.fill-sw { position: absolute; left: 11px; top: 0; }
.stroke-sw { position: absolute; left: 30px; top: 19px; }
.cont { display: flex; align-items: center; height: 24px; margin-top: 15px; padding-left: 12px; flex: none; }
.cont-on { width: 28px; height: 24px; background: #303030; border-radius: 5px; display: flex; align-items: center; justify-content: center; }
.cont-on i { width: 16px; height: 14px; background: #6c6c6c; border: 2px solid #c0c0c0; }
.cont-t { font: 700 21px "Liberation Serif", serif; color: #c0c0c0; margin-left: 10px; }
.bigbtn { margin: 14px 10px 0 12px; height: 44px; background: #303030; border-radius: 5px; display: flex; align-items: center; justify-content: center; position: relative; flex: none; }
.bigbtn.fly::after { right: 2px; bottom: 3px; }
.preview { height: 28px; margin-top: 20px; display: flex; justify-content: center; align-items: center; flex: none; }
.bigbtn.lower { margin-top: 10px; }

.work { width: 2286px; flex: none; background: #424242; display: flex; flex-direction: column; }
.tabs { height: 58px; flex: none; border-bottom: 2px solid #3a3a3a; background: #424242; }
.doctab { width: 429px; height: 56px; background: #535353; display: flex; align-items: center; font-size: 20px; letter-spacing: .1px; color: #f6f6f6; padding: 0 0 4px 27px; gap: 15px; white-space: nowrap; }
.x { font-size: 26px; line-height: 1; color: #e0e0e0; }
.ed { display: grid; grid-template-columns: 32px 2222px 32px; grid-template-rows: 32px 1482px 32px 2px; flex: none; }

.hr { grid-column: 1 / 3; grid-row: 1; background: #1e1e1e; border-bottom: 2px solid #888; display: flex; overflow: hidden; position: relative; }
.corner { width: 31px; flex: none; border-right: 1px solid #8a8a8a; position: relative; }
.corner::before { content: ""; position: absolute; left: 0; right: 2px; top: 8px; border-top: 2px dotted #aaa; }
.corner::after { content: ""; position: absolute; left: 8px; top: 0; bottom: 0; border-left: 2px dotted #aaa; }
.hc { width: 76.500px; flex: none; border-left: 1px solid #888; font-size: 19px; line-height: 24px; color: #f0f0f0; padding-left: 3px; white-space: nowrap; position: relative; background: repeating-linear-gradient(90deg, #8a8a8a 0 1px, transparent 1px 7.650px) left bottom / 100% 4px no-repeat; }
.hc::after { content: ""; position: absolute; left: 38px; bottom: 0; height: 9px; width: 1px; background: #8a8a8a; }
.hc.lead { width: 15px; border-left: 0; }
.hc.lead::after { display: none; }
.hmark { position: absolute; left: 1356px; top: 1px; height: 28px; border-left: 2px dotted #fff; }

.vs { grid-column: 3; grid-row: 1 / 3; background: #494949; position: relative; }
.vpill { position: absolute; left: 3px; right: 3px; top: 575px; height: 369px; background: #666; border-radius: 14px; }

.vr { grid-column: 1; grid-row: 2; background: #1e1e1e; overflow: hidden; position: relative; border-right: 1px solid #888; }
.vc { height: 76.500px; border-top: 1px solid #888; font-size: 19px; line-height: 18.500px; color: #f0f0f0; padding: 3px 14px 0 4px; word-break: break-all; position: relative; background: repeating-linear-gradient(180deg, #8a8a8a 0 1px, transparent 1px 7.650px) right top / 4px 100% no-repeat; }
.vc::after { content: ""; position: absolute; right: 0; top: 38px; width: 9px; height: 1px; background: #8a8a8a; }
.vc.lead { height: 41px; }
.vc.lead::after { display: none; }
.vmark { position: absolute; left: 0; right: 0; top: 929px; border-top: 2px dotted #fff; }

.canvas { grid-column: 2; grid-row: 2; background: #5f5f5f; position: relative; overflow: hidden; }
.art { position: absolute; left: -144px; top: -284px; width: 2880px; height: 1800px; }
.page { position: absolute; left: 388px; top: 284px; width: 1978px; height: 1482px; background: #fff; }
.lines { position: absolute; left: 0; top: 0; }
.txt { position: absolute; color: #000; font-family: "Liberation Serif", "Times New Roman", serif; white-space: nowrap; transform-origin: 0 0; }
.bau { left: 1024px; top: 1358px; font-size: 272px; font-weight: 700; line-height: 1; transform: rotate(-90deg) scaleX(.963); -webkit-text-stroke: 2px #000; }
.dth { left: 1274px; top: 1356px; font-size: 100px; font-weight: 700; line-height: 1; letter-spacing: .7px; transform: rotate(-90deg); }
.abc { left: 481px; top: 1275px; font-size: 100px; font-weight: 700; line-height: 1; letter-spacing: 1.100px; transform: rotate(-.5deg); }
.sub { left: 493px; top: 1376px; font-size: 48px; line-height: 59px; letter-spacing: .2px; }
.sub2 { letter-spacing: -.8px; }
.lec { left: 1414px; top: 734px; font-size: 31.800px; line-height: 39px; transform: rotate(-.4deg); }
.lec2 { left: 1380px; top: 1393px; font-size: 31.500px; line-height: 39.300px; transform: rotate(25.500deg); }
.sc { font-size: .72em; letter-spacing: 1.300px; line-height: 1; }
.rt { left: 1965px; top: 339px; font-size: 97px; font-weight: 700; line-height: 117px; letter-spacing: .6px; }

.status { grid-column: 1 / -1; grid-row: 3; display: flex; }
.stat-l { width: 1028px; flex: none; background: #535353; display: flex; align-items: center; font-size: 19px; color: #f0f0f0; position: relative; padding-left: 29px; }
.zoomv { width: 83px; }
.n1 { margin-left: 27px; }
.n2 { margin-left: 27px; }
.pgf { width: 176px; height: 34px; margin-left: 28px; }
.pgf .v { line-height: 29px; padding-left: 7px; }
.n3 { margin-left: 27px; }
.n4 { margin-left: 27px; }
.n5 { margin-left: 33px; }
.basic { margin-left: 31px; width: 204px; white-space: nowrap; }
.dot { width: 22px; height: 22px; border-radius: 50%; background: #4a9a2f; margin-left: 33px; }
.noerr { margin-left: 9px; width: 126px; white-space: nowrap; }
.stat-r { flex: 1; background: #494949; display: flex; align-items: center; }
.hpill { width: 428px; height: 27px; margin-left: 250px; background: #666; border-radius: 14px; flex: none; }
.spreadic { margin-left: 512px; }
.rgrip { width: 12px; height: 20px; margin-left: 23px; background: radial-gradient(circle, #7a7a7a 1px, transparent 1.300px) 0 0 / 4px 4px; flex: none; }

/* panel */
.panel { flex: 1; min-width: 0; background: #535353; border-left: 5px solid #3a3a3a; display: flex; flex-direction: column; }
.pstrip { height: 24px; background: #424242; border-bottom: 2px solid #3c3c3c; flex: none; }
.ptabs { height: 54px; flex: none; display: flex; background: #424242; border-bottom: 2px solid #3a3a3a; font-size: 19.500px; font-weight: 700; color: #adadad; overflow: hidden; }
.ptab { display: flex; align-items: center; border-right: 2px solid #3a3a3a; white-space: nowrap; overflow: hidden; padding-top: 2px; flex: none; }
.ptab.first { width: 150px; padding-left: 24px; }
.ptab.act { width: 123px; background: #535353; color: #f2f2f2; padding-left: 13px; gap: 11px; height: 54px; }
.ptab.third { width: 153px; padding-left: 23px; font-size: 20px; }
.pmenu { display: flex; align-items: center; padding-left: 45px; flex: none; }
.masters { height: 128px; flex: none; border-bottom: 4px solid #4b4b4b; padding: 8px 18px 0 7px; font-size: 19px; color: #f2f2f2; }
.mrow { display: flex; justify-content: space-between; height: 58px; }
.mrow span { margin-top: 8px; }
.mth { display: flex; height: 47px; border-bottom: 2px solid #eee; gap: 1px; background: #555; }
.mth i { width: 48px; background: #fff; height: 45px; }
.spreads { flex: 1; padding: 20px 0 0 166px; }
.spread { width: 144px; height: 71px; display: flex; position: relative; }
.pg { flex: 1; background: #fff; position: relative; border-bottom: 1px solid #ddd; }
.pg.empty { background: none; border: 0; }
.a { position: absolute; left: 2px; top: 2px; font: 700 19px/19px "Liberation Sans", sans-serif; color: #000; background: #fff; padding: 0 2px; }
.a.ar { left: auto; right: 0; }
.spine { position: absolute; left: 71px; top: -12px; bottom: -11px; width: 2px; background: #c0c0c0; }
.marker { position: absolute; left: 98px; top: -12px; border-left: 10px solid transparent; border-right: 10px solid transparent; border-top: 10px solid #c0c0c0; }
.spread.sel .pg { background: #94c1f5; }
.mini { position: absolute; left: 0; top: 0; }
.plabel { width: 144px; height: 57px; display: flex; justify-content: center; padding-top: 11px; font-size: 19px; color: #eee; }
.plabel span { height: 28px; line-height: 27px; padding: 0 7px; }
.plabel.right { padding-left: 72px; }
.cur { background: #2f86e3; color: #fff; font-weight: 700; }
.pfoot { height: 50px; flex: none; border-top: 2px solid #4a4a4a; border-bottom: 2px solid #3c3c3c; display: flex; align-items: center; padding-left: 11px; font-size: 19px; color: #f2f2f2; }
.pfoot span { width: 305px; white-space: nowrap; }
.fic { margin-top: -4px; }
.f2 { margin-left: 30px; }
.f3 { margin-left: 33px; }
```
